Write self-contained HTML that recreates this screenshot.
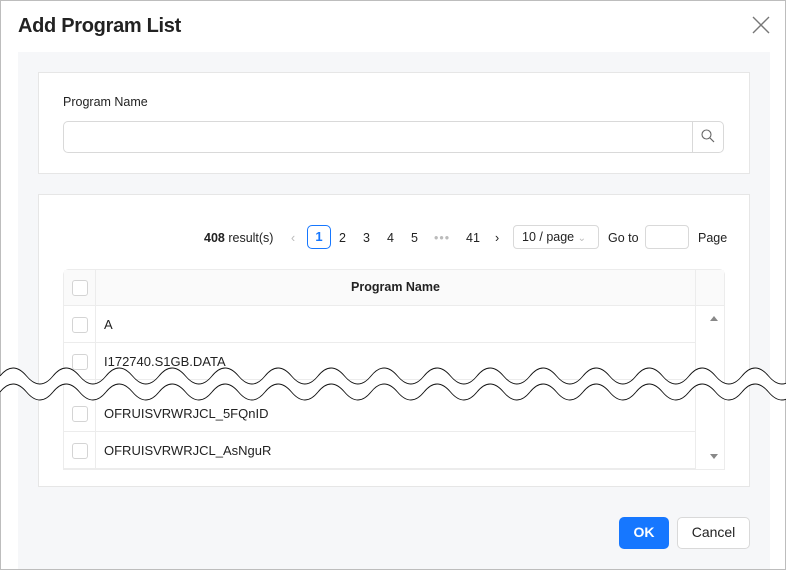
<!DOCTYPE html>
<html><head><meta charset="utf-8"><style>
*{box-sizing:border-box;margin:0;padding:0}
body{width:786px;height:570px;background:#fff;font-family:"Liberation Sans",sans-serif;color:#222;position:relative;overflow:hidden}
.a{position:absolute}
.frame{left:0;top:0;width:786px;height:570px;border:1px solid #bdbdbd}
.title{left:18px;top:15px;font-size:20px;font-weight:bold;color:#222;letter-spacing:-0.3px}
.gray{left:18px;top:52px;width:752px;height:517px;background:#f6f7f9}
.card{background:#fff;border:1px solid #e6e6e6}
.cb{width:16px;height:16px;border:1px solid #d4d4d4;border-radius:3px;background:#fff}
.row{left:63px;width:633px;height:37px;border-bottom:1px solid #ececec;font-size:13px}
.row .cb{position:absolute;left:9px;top:11px}
.row span{position:absolute;left:41px;top:11px}
.pg{font-size:12.5px;top:231px}
.btn{border-radius:5px;font-size:14px;text-align:center;line-height:31px}
</style></head><body>
<div class="a frame"></div>
<div class="a title">Add Program List</div>
<svg class="a" style="left:752px;top:16px" width="18" height="18" viewBox="0 0 18 18"><path d="M1 1L17 17M17 1L1 17" stroke="#777" stroke-width="1.4"/></svg>
<div class="a gray"></div>
<div class="a card" style="left:38px;top:72px;width:712px;height:102px"></div>
<div class="a" style="left:63px;top:95px;font-size:12.5px">Program Name</div>
<div class="a" style="left:63px;top:121px;width:661px;height:32px;border:1px solid #d9d9d9;border-radius:5px"></div>
<div class="a" style="left:692px;top:122px;width:1px;height:30px;background:#d9d9d9"></div>
<svg class="a" style="left:700px;top:128px" width="16" height="16" viewBox="0 0 16 16"><circle cx="6.5" cy="6.5" r="4.5" stroke="#666" stroke-width="1.1" fill="none"/><path d="M10 10L14 14" stroke="#666" stroke-width="1.2"/></svg>
<div class="a card" style="left:38px;top:194px;width:712px;height:293px"></div>
<div class="a pg" style="left:204px"><b>408</b> result(s)</div>
<div class="a pg" style="left:291px;color:#bbb">&lsaquo;</div>
<div class="a" style="left:307px;top:225px;width:24px;height:24px;border:1px solid #1677ff;border-radius:5px;color:#1677ff;font-size:13px;font-weight:bold;text-align:center;line-height:22px">1</div>
<div class="a pg" style="left:339px">2</div>
<div class="a pg" style="left:363px">3</div>
<div class="a pg" style="left:387px">4</div>
<div class="a pg" style="left:411px">5</div>
<div class="a pg" style="left:434px;color:#bbb;letter-spacing:1px">•••</div>
<div class="a pg" style="left:466px">41</div>
<div class="a pg" style="left:495px">&rsaquo;</div>
<div class="a" style="left:513px;top:225px;width:86px;height:24px;border:1px solid #d9d9d9;border-radius:4px;font-size:12.5px;padding:4px 0 0 8px">10 / page <span style="color:#bbb;font-size:10px">&#8964;</span></div>
<div class="a pg" style="left:608px">Go to</div>
<div class="a" style="left:645px;top:225px;width:44px;height:24px;border:1px solid #d9d9d9;border-radius:4px"></div>
<div class="a pg" style="left:698px">Page</div>
<div class="a" style="left:63px;top:269px;width:662px;height:201px;border:1px solid #ececec;border-radius:6px 6px 0 0"></div>
<div class="a" style="left:64px;top:270px;width:660px;height:36px;background:#fafafa;border-bottom:1px solid #ececec"></div>
<div class="a" style="left:695px;top:270px;width:1px;height:199px;background:#ececec"></div>
<div class="a cb" style="left:72px;top:280px"></div>
<div class="a" style="left:96px;top:280px;width:599px;text-align:center;font-size:12.5px;font-weight:bold">Program Name</div>
<div class="a row" style="top:306px"><div class="cb"></div><span>A</span></div>
<div class="a row" style="top:343px"><div class="cb"></div><span>I172740.S1GB.DATA</span></div>
<div class="a row" style="top:395px"><div class="cb"></div><span>OFRUISVRWRJCL_5FQnID</span></div>
<div class="a row" style="top:432px"><div class="cb"></div><span>OFRUISVRWRJCL_AsNguR</span></div>
<div class="a" style="left:95px;top:270px;width:1px;height:199px;background:#ececec"></div>
<div class="a" style="left:710px;top:316px;border:4.5px solid transparent;border-bottom:5px solid #888;border-top:0"></div>
<div class="a" style="left:710px;top:454px;border:4.5px solid transparent;border-top:5px solid #888;border-bottom:0"></div>
<svg class="a" style="left:0;top:360px" width="786" height="50" viewBox="0 0 786 50">
<path d="M0 16 Q13 0 26.5 16 T53 16 T79.5 16 T106 16 T132.5 16 T159 16 T185.5 16 T212 16 T238.5 16 T265 16 T291.5 16 T318 16 T344.5 16 T371 16 T397.5 16 T424 16 T450.5 16 T477 16 T503.5 16 T530 16 T556.5 16 T583 16 T609.5 16 T636 16 T662.5 16 T689 16 T715.5 16 T742 16 T768.5 16 T795 16 L795 32 Q781 48 768.5 32 T742 32 T715.5 32 T689 32 T662.5 32 T636 32 T609.5 32 T583 32 T556.5 32 T530 32 T503.5 32 T477 32 T450.5 32 T424 32 T397.5 32 T371 32 T344.5 32 T318 32 T291.5 32 T265 32 T238.5 32 T212 32 T185.5 32 T159 32 T132.5 32 T106 32 T79.5 32 T53 32 T26.5 32 T0 32Z" fill="#fff"/>
<path d="M0 16 Q13 0 26.5 16 T53 16 T79.5 16 T106 16 T132.5 16 T159 16 T185.5 16 T212 16 T238.5 16 T265 16 T291.5 16 T318 16 T344.5 16 T371 16 T397.5 16 T424 16 T450.5 16 T477 16 T503.5 16 T530 16 T556.5 16 T583 16 T609.5 16 T636 16 T662.5 16 T689 16 T715.5 16 T742 16 T768.5 16 T795 16" fill="none" stroke="#111" stroke-width="0.9"/>
<path d="M0 32 Q13 16 26.5 32 T53 32 T79.5 32 T106 32 T132.5 32 T159 32 T185.5 32 T212 32 T238.5 32 T265 32 T291.5 32 T318 32 T344.5 32 T371 32 T397.5 32 T424 32 T450.5 32 T477 32 T503.5 32 T530 32 T556.5 32 T583 32 T609.5 32 T636 32 T662.5 32 T689 32 T715.5 32 T742 32 T768.5 32 T795 32" fill="none" stroke="#111" stroke-width="0.9"/>
</svg>
<div class="a btn" style="left:619px;top:517px;width:50px;height:32px;background:#1677ff;color:#fff;font-weight:bold">OK</div>
<div class="a btn" style="left:677px;top:517px;width:73px;height:32px;border:1px solid #d9d9d9;background:#fff;line-height:29px">Cancel</div>
</body></html>
